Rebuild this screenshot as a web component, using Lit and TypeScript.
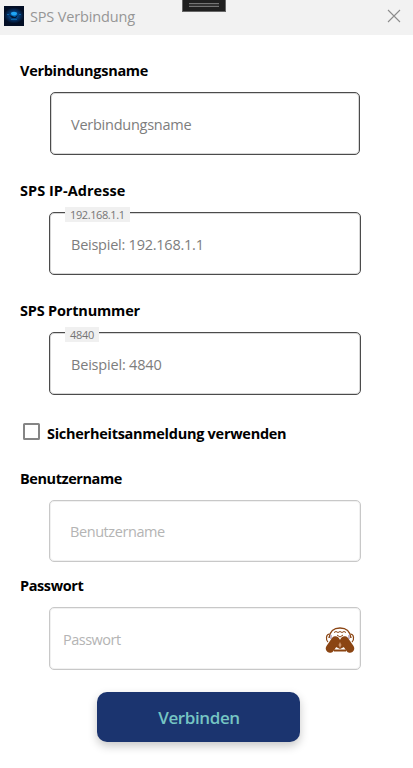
import { LitElement, html, css, nothing } from "lit";
import { customElement, property } from "lit/decorators.js";

@customElement("form-field")
class FormField extends LitElement {
  @property() label = "";
  @property() hint = "";
  @property() tag = "";
  @property({ type: Boolean, reflect: true }) muted = false;
  @property({ type: Boolean, reflect: true }) narrow = false;
  @property({ type: Boolean, reflect: true }) secret = false;

  static styles = css`
    :host { display: block; }
    .label { height: 20px; line-height: 20px; margin-left: 20px; color: #000; font-size: 14.5px; font-weight: 700; letter-spacing: var(--ls, 0); white-space: nowrap; }
    .box { position: relative; box-sizing: border-box; width: 312px; height: 63px; margin: 11px 0 0 49px; border: 1px solid #4b4b4b; box-shadow: inset 0 0 0 1px rgba(75, 75, 75, .22); border-radius: 5px; padding: 2px 5px 0 21px; display: flex; align-items: center; justify-content: space-between; }
    :host([narrow]) .box { width: 310px; margin-left: 50px; padding-left: 20px; }
    :host([muted]) .box { border-color: #c8c8c8; box-shadow: inset 0 0 0 1px rgba(200, 200, 200, .25); height: 62px; padding-left: 20px; }
    :host([secret]) .box { height: 63px; padding-left: 13px; }
    .hint { font-size: 14.5px; line-height: 20px; color: #7d7d7d; letter-spacing: var(--hs, 0); white-space: nowrap; }
    :host([muted]) .hint { color: #b4b4b4; }
    .tag { position: absolute; left: 15px; top: -6px; height: 15px; line-height: 16px; padding: 0 5px; background: #f0f0f0; color: #757575; font-size: 11px; letter-spacing: var(--ts, 0); white-space: nowrap; }
    svg { display: block; }
  `;

  render() {
    return html`
      <div class="label">${this.label}</div>
      <div class="box">
        ${this.tag ? html`<span class="tag">${this.tag}</span>` : nothing}
        <span class="hint">${this.hint}</span>
        ${this.secret ? html`<svg width="30" height="28" viewBox="0 0 30 28" fill="none" stroke="#8b4513">
          <path d="M4 12C5 5 8 2 15 2s10 3 11 10" stroke-width="1.500"/>
          <path d="M4.500 8C1 8 .500 14 3 16M25.500 8c3.500 0 4 6 1.500 8" stroke-width="1.2"/>
          <path d="M6 13V9M24 13V9" stroke="#b4a4c0" stroke-width="1.500"/>
          <path d="M9 6.500l2-1 2 1 2-1 2 1 2-1 2 1M12 9l3 2 3-2" stroke-width="1"/>
          <path d="M9 24.500h12" stroke-width="2"/>
          <path d="M5 22.500L10.500 14.500M25 22.500L19.500 14.500" stroke-width="8.500" stroke-linecap="round"/>
          <path d="M7 12h6l2 2 2-2h6l-2 8-6 3-6-3z" fill="#8b4513" stroke="none"/>
          <path d="M13.500 19l1.500-3 1.500 3-1.500 3z" fill="#c9926c" stroke="none"/>
        </svg>` : nothing}
      </div>`;
  }
}

@customElement("app-root")
class AppRoot extends LitElement {
  static styles = css`
    :host { display: block; position: relative; width: 413px; height: 768px; overflow: hidden; background: #fff; font-family: "Open Sans", "Noto Sans", sans-serif; }
    .bar { box-sizing: border-box; height: 35px; background: #f2f2f2; display: flex; align-items: center; padding: 0 12px 3px 4px; }
    .title { flex: 1; margin-left: 6px; padding-top: 2px; font-size: 14.5px; line-height: 20px; color: #969696; letter-spacing: -.15px; }
    .handle { position: absolute; left: 182px; top: 0; box-sizing: border-box; width: 44px; height: 12px; background: #202020; border: 1px solid #666; border-top: 0; display: flex; justify-content: center; }
    .grip { box-sizing: border-box; width: 30px; height: 4px; margin-top: 3px; border: 1px solid #747474; border-width: 1px 0; background: #333; }
    .form { display: flex; flex-direction: column; padding-top: 26px; }
    .name { --ls: -.29px; --hs: -.25px; }
    .address { --ls: .04px; --hs: -.24px; --ts: -.4px; }
    .port { --ls: -.18px; --hs: -.19px; --ts: -.25px; }
    .gap { margin-top: 26px; }
    .check { display: flex; align-items: center; gap: 7px; height: 20px; margin: 27px 0 0 23px; font-size: 14.5px; font-weight: 700; color: #000; white-space: nowrap; letter-spacing: -.27px; }
    .tick { box-sizing: border-box; width: 17px; height: 17px; border: 2px solid #858585; border-radius: 1.5px; margin-top: -2px; }
    .caption { padding-top: 3px; line-height: 20px; }
    .user { margin-top: 27px; --ls: -.43px; --hs: -.42px; }
    .pass { margin-top: 14px; --ls: -.4px; --hs: -.5px; }
    .go { display: flex; align-items: center; justify-content: center; width: 203px; height: 50px; margin: 22px 0 0 97px; padding: 0 0 0 1px; border: 0; border-radius: 10px; background: #1b346f; color: #76c5c3; font: 600 17px "Open Sans", sans-serif; letter-spacing: -.4px; box-shadow: 0 4px 10px rgba(0, 0, 0, .22); }
    svg { display: block; }
  `;

  render() {
    return html`
      <div class="bar">
        <svg width="20" height="20" viewBox="0 0 20 20">
          <defs><radialGradient id="glow"><stop offset="0" stop-color="#0673c4"/><stop offset=".5" stop-color="#053a75"/><stop offset="1" stop-color="#020e25"/></radialGradient></defs>
          <path fill="#020e25" d="M0 0h20v20H0z"/>
          <ellipse cx="10" cy="9.500" rx="10" ry="8" fill="url(#glow)"/>
          <ellipse cx="10" cy="7.500" rx="3" ry="1.800" fill="#20a6f5"/>
          <path d="M5 9l3 1 3 1 3-2-2 3H8z" fill="#03152f"/>
          <path d="M3 8h2v1H3zM15 8h2v1h-2zM7 13h6v1H7z" fill="#0b62a3"/>
        </svg>
        <span class="title">SPS Verbindung</span>
        <svg width="14" height="14" viewBox="0 0 14 14"><path d="M1 1l12 12M13 1L1 13" stroke="#8c8c8c" stroke-width="1.100"/></svg>
      </div>
      <div class="handle"><span class="grip"></span></div>
      <div class="form">
        <form-field class="name" narrow label="Verbindungsname" hint="Verbindungsname"></form-field>
        <form-field class="gap address" label="SPS IP-Adresse" hint="Beispiel: 192.168.1.1" tag="192.168.1.1"></form-field>
        <form-field class="gap port" label="SPS Portnummer" hint="Beispiel: 4840" tag="4840"></form-field>
        <div class="check"><span class="tick"></span><span class="caption">Sicherheitsanmeldung verwenden</span></div>
        <form-field class="user" muted label="Benutzername" hint="Benutzername"></form-field>
        <form-field class="pass" muted secret label="Passwort" hint="Passwort"></form-field>
        <button class="go">Verbinden</button>
      </div>`;
  }
}
